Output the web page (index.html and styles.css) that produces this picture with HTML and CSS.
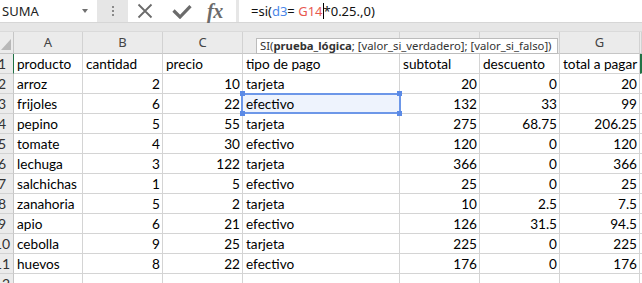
FILE: index.html
```html
<!DOCTYPE html>
<html lang="es">
<head>
<meta charset="utf-8">
<title>SUMA</title>
<link rel="stylesheet" href="styles.css">
</head>
<body>
<div class="topbar">
  <div class="namebox"><span class="nb-text">SUMA</span><span class="nb-arrow"></span></div>
  <div class="grip"><span></span><span></span><span></span></div>
  <div class="buttons">
    <svg class="ic-x" width="16" height="16" viewBox="0 0 16 16"><path d="M1.5 1.5L14.5 14.5M14.5 1.5L1.5 14.5" stroke="#6b6b6b" stroke-width="1.8" fill="none"/></svg>
    <svg class="ic-ok" width="20" height="14" viewBox="0 0 20 14"><path d="M1.5 5.5L8 12L18.5 1.2" stroke="#6b6b6b" stroke-width="3.2" fill="none"/></svg>
    <span class="ic-fx">fx</span>
  </div>
  <div class="formula">=si(<span class="f-blue">d3</span>= <span class="f-red">G14</span><span class="caret"></span>*0.25.,0)</div>
</div>
<div class="band"></div>
<div class="grid">
  <div class="corner"><span class="tri"></span></div>
  <div class="h">A</div><div class="h">B</div><div class="h">C</div><div class="h">D</div><div class="h">E</div><div class="h">F</div><div class="h">G</div><div class="h"></div>

  <div class="r sel"><span>1</span></div>
  <div class="c">producto</div><div class="c">cantidad</div><div class="c">precio</div><div class="c">tipo de pago</div><div class="c">subtotal</div><div class="c">descuento</div><div class="c">total a pagar</div><div class="c act"></div>

  <div class="r"><span>2</span></div>
  <div class="c">arroz</div><div class="c n">2</div><div class="c n">10</div><div class="c">tarjeta</div><div class="c n">20</div><div class="c n">0</div><div class="c n">20</div><div class="c"></div>

  <div class="r"><span>3</span></div>
  <div class="c">frijoles</div><div class="c n">6</div><div class="c n">22</div><div class="c ref">efectivo<span class="box"></span><span class="hd tl"></span><span class="hd tr"></span><span class="hd bl"></span><span class="hd br"></span></div><div class="c n">132</div><div class="c n">33</div><div class="c n">99</div><div class="c"></div>

  <div class="r"><span>4</span></div>
  <div class="c">pepino</div><div class="c n">5</div><div class="c n">55</div><div class="c">tarjeta</div><div class="c n">275</div><div class="c n">68.75</div><div class="c n">206.25</div><div class="c"></div>

  <div class="r"><span>5</span></div>
  <div class="c">tomate</div><div class="c n">4</div><div class="c n">30</div><div class="c">efectivo</div><div class="c n">120</div><div class="c n">0</div><div class="c n">120</div><div class="c"></div>

  <div class="r"><span>6</span></div>
  <div class="c">lechuga</div><div class="c n">3</div><div class="c n">122</div><div class="c">tarjeta</div><div class="c n">366</div><div class="c n">0</div><div class="c n">366</div><div class="c"></div>

  <div class="r"><span>7</span></div>
  <div class="c">salchichas</div><div class="c n">1</div><div class="c n">5</div><div class="c">efectivo</div><div class="c n">25</div><div class="c n">0</div><div class="c n">25</div><div class="c"></div>

  <div class="r"><span>8</span></div>
  <div class="c">zanahoria</div><div class="c n">5</div><div class="c n">2</div><div class="c">tarjeta</div><div class="c n">10</div><div class="c n">2.5</div><div class="c n">7.5</div><div class="c"></div>

  <div class="r"><span>9</span></div>
  <div class="c">apio</div><div class="c n">6</div><div class="c n">21</div><div class="c">efectivo</div><div class="c n">126</div><div class="c n">31.5</div><div class="c n">94.5</div><div class="c"></div>

  <div class="r"><span>10</span></div>
  <div class="c">cebolla</div><div class="c n">9</div><div class="c n">25</div><div class="c">tarjeta</div><div class="c n">225</div><div class="c n">0</div><div class="c n">225</div><div class="c"></div>

  <div class="r"><span>11</span></div>
  <div class="c">huevos</div><div class="c n">8</div><div class="c n">22</div><div class="c">efectivo</div><div class="c n">176</div><div class="c n">0</div><div class="c n">176</div><div class="c"></div>

  <div class="r"><span>12</span></div>
  <div class="c"></div><div class="c"></div><div class="c"></div><div class="c"></div><div class="c"></div><div class="c"></div><div class="c"></div><div class="c"></div>
</div>
<div class="tip">SI(<b>prueba_lógica</b>; [valor_si_verdadero]; [valor_si_falso])</div>
</body>
</html>
```
FILE: styles.css
```css
html, body {
  margin: 0;
  padding: 0;
}
body {
  width: 642px;
  height: 283px;
  overflow: hidden;
  position: relative;
  background: #e6e6e6;
  font-family: Lato, "Noto Sans", sans-serif;
  color: #000;
}
.topbar {
  display: flex;
  height: 22px;
  border-bottom: 1px solid #d6d6d6;
  background: #e6e6e6;
}
.namebox {
  width: 97px;
  background: #fff;
  display: flex;
  align-items: center;
  font-family: "Noto Sans", sans-serif;
  font-size: 13px;
  padding-left: 2px;
  box-sizing: border-box;
  color: #222;
}
.nb-arrow {
  margin-left: auto;
  margin-right: 9px;
  width: 0;
  height: 0;
  border-left: 3.5px solid transparent;
  border-right: 3.5px solid transparent;
  border-top: 4px solid #707070;
}
.grip {
  width: 31px;
  display: flex;
  flex-direction: column;
  align-items: center;
  justify-content: center;
  gap: 2px;
}
.grip span {
  width: 2px;
  height: 2px;
  background: #8a8a8a;
}
.buttons {
  width: 108px;
  background: #fff;
  display: flex;
  align-items: center;
}
.ic-x { margin-left: 9px; }
.ic-ok { margin-left: 19px; margin-top: 2px; }
.ic-fx {
  margin-left: 15px;
  font-family: "Liberation Serif", serif;
  font-style: italic;
  font-weight: bold;
  font-size: 20px;
  color: #6b6b6b;
  line-height: 22px;
  letter-spacing: -0.5px;
}
.formula {
  flex: 1;
  margin-left: 3px;
  background: #fff;
  font-family: "Noto Sans", sans-serif;
  font-size: 13px;
  line-height: 22px;
  padding-left: 12px;
  color: #111;
  white-space: nowrap;
}
.f-blue { color: #4a86e8; }
.f-red { color: #e8584f; }
.caret {
  display: inline-block;
  width: 1px;
  height: 16px;
  background: #000;
  vertical-align: -3px;
}
.band {
  height: 8px;
  border-bottom: 1px solid #dadada;
}
.grid {
  display: grid;
  grid-template-columns: 14px 69px 80px 80px 157px 80px 80px 80px 2px;
  grid-template-rows: 22px;
  grid-auto-rows: 20px;
  background: #fff;
}
.corner {
  background: #ebebeb;
  border-bottom: 1px solid #c6c6c6;
  border-right: 1px solid #c6c6c6;
  box-sizing: border-box;
  position: relative;
  overflow: hidden;
}
.tri {
  position: absolute;
  right: 2px;
  bottom: 3px;
  width: 0;
  height: 0;
  border-left: 10px solid transparent;
  border-bottom: 11px solid #b8b8b8;
}
.h {
  background: #ebebeb;
  border-right: 1px solid #d2d2d2;
  border-bottom: 1px solid #c6c6c6;
  box-sizing: border-box;
  text-align: center;
  font-family: "Noto Sans", sans-serif;
  font-size: 13px;
  line-height: 21px;
  color: #444;
}
.r {
  background: #ebebeb;
  border-right: 1px solid #c6c6c6;
  border-bottom: 1px solid #d2d2d2;
  box-sizing: border-box;
  overflow: hidden;
  font-size: 14px;
  line-height: 20px;
  color: #333;
}
.r span {
  display: block;
  width: 28px;
  margin-left: -12px;
  text-align: center;
}
.r.sel {
  border-right: 1px solid #217346;
}
.c {
  border-right: 1px solid #d4d4d4;
  border-bottom: 1px solid #d4d4d4;
  box-sizing: border-box;
  padding: 0 2px 0 3px;
  font-size: 13.6px;
  line-height: 20px;
  white-space: nowrap;
  overflow: hidden;
}
.n { text-align: right; }
.act {
  border-left: 2px solid #217346;
  padding: 0;
}
.ref {
  position: relative;
  overflow: visible;
  background: #eef3fd;
}
.box {
  position: absolute;
  left: -2px;
  top: -1px;
  right: -2px;
  bottom: -1px;
  border: 2px solid #6d97e8;
  box-sizing: border-box;
}
.hd {
  position: absolute;
  width: 5px;
  height: 5px;
  background: #5b8ae6;
}
.hd.tl { left: -3px; top: -3px; }
.hd.tr { right: -3px; top: -3px; }
.hd.bl { left: -3px; bottom: -3px; }
.hd.br { right: -3px; bottom: -3px; }
.tip {
  position: absolute;
  left: 256px;
  top: 38px;
  width: 302px;
  height: 16px;
  box-sizing: border-box;
  background: #fff;
  border: 1px solid #bcbcbc;
  font-family: "Noto Sans", sans-serif;
  font-size: 11.3px;
  line-height: 14px;
  padding-left: 3px;
  color: #333;
  white-space: nowrap;
  overflow: hidden;
}
.tip b { font-weight: 700; }
```
